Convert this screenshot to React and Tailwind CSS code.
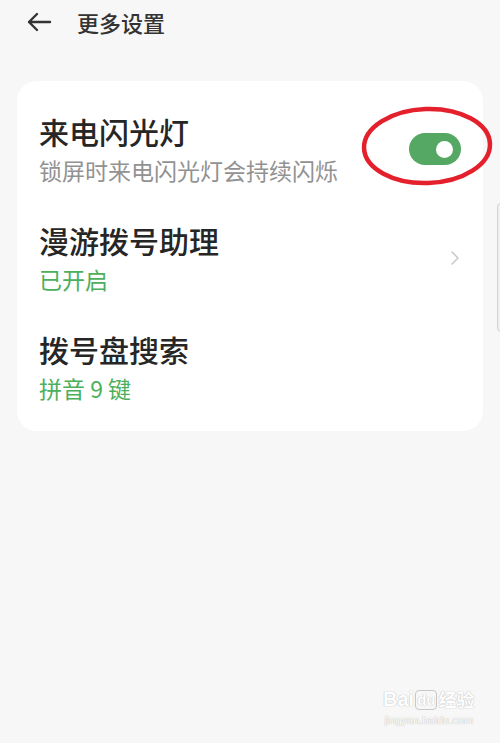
import { ChevronRight } from "lucide-react";

const font = { fontFamily: '"Noto Sans CJK SC", "Noto Sans", sans-serif' };

const Toggle = () => (
  <div className="w-[52px] h-[32px] rounded-full bg-[#55a863] flex items-center justify-end pr-[8px]">
    <div className="w-[17px] h-[17px] rounded-full bg-white" />
  </div>
);

const Item = ({ title, sub, green, right }) => (
  <div className="flex items-center justify-between">
    <div className="flex flex-col">
      <span className="text-[30px] leading-[36px] font-medium text-[#262626]">{title}</span>
      <span
        className={
          "text-[23px] leading-[30px] mt-[6px] " +
          (green ? "text-[#4caf5c]" : "text-[#929292]")
        }
      >
        {sub}
      </span>
    </div>
    {right}
  </div>
);

const App = () => {
  return (
    <div className="relative w-[500px] h-[743px] bg-[#f7f7f7] overflow-hidden" style={font}>
      {/* Header */}
      <div className="flex items-center h-[44px] pl-[26px]">
        <svg width="26" height="20" viewBox="0 0 26 20" fill="none" stroke="#333" strokeWidth="2.4" strokeLinecap="round" strokeLinejoin="round">
          <path d="M24 10H3M11 2L3 10l8 8" />
        </svg>
        <span className="ml-[25px] text-[22px] leading-[28px] font-medium text-[#333]">更多设置</span>
      </div>

      {/* Card */}
      <div className="mx-[17px] mt-[37px] bg-white rounded-[20px] pt-[32px] pb-[28px] pl-[22px] pr-[22px] flex flex-col gap-[37px]">
        <Item title="来电闪光灯" sub="锁屏时来电闪光灯会持续闪烁" right={<Toggle />} />
        <Item
          title="漫游拨号助理"
          sub="已开启"
          green
          right={<ChevronRight size={24} strokeWidth={1.4} className="text-[#c4c4c4] -mr-[6px]" />}
        />
        <Item title="拨号盘搜索" sub="拼音 9 键" green />
      </div>

      {/* Red annotation */}
      <svg className="absolute left-[360px] top-[105px]" width="136" height="84" viewBox="0 0 136 84" fill="none">
        <ellipse cx="67" cy="41" rx="63" ry="37" stroke="#e3202b" strokeWidth="4.5" transform="rotate(-2 67 41)" />
      </svg>

      {/* Scrollbar */}
      <div className="absolute left-[497px] top-[203px] w-[8px] h-[129px] rounded-full border border-[#d4d4d4] bg-[#efefef]" />

      {/* Watermark */}
      <div className="absolute left-[383px] top-[688px] flex flex-col items-center text-white" style={{ fontFamily: '"Liberation Sans", sans-serif', textShadow: "0 0 1px #bdbdbd, 0 0 1px #bdbdbd" }}>
        <div className="flex items-end">
          <span className="text-[20px] leading-[22px] font-bold">Bai</span>
          <span className="text-[15px] leading-[18px] font-bold border border-[#c8c8c8] rounded-[4px] px-[1px] mx-[1px]">du</span>
          <span className="text-[18px] leading-[22px] font-bold" style={font}>经验</span>
        </div>
        <span className="text-[11px] leading-[14px] mt-[3px]">jingyan.baidu.com</span>
      </div>
    </div>
  );
};

export default App;
